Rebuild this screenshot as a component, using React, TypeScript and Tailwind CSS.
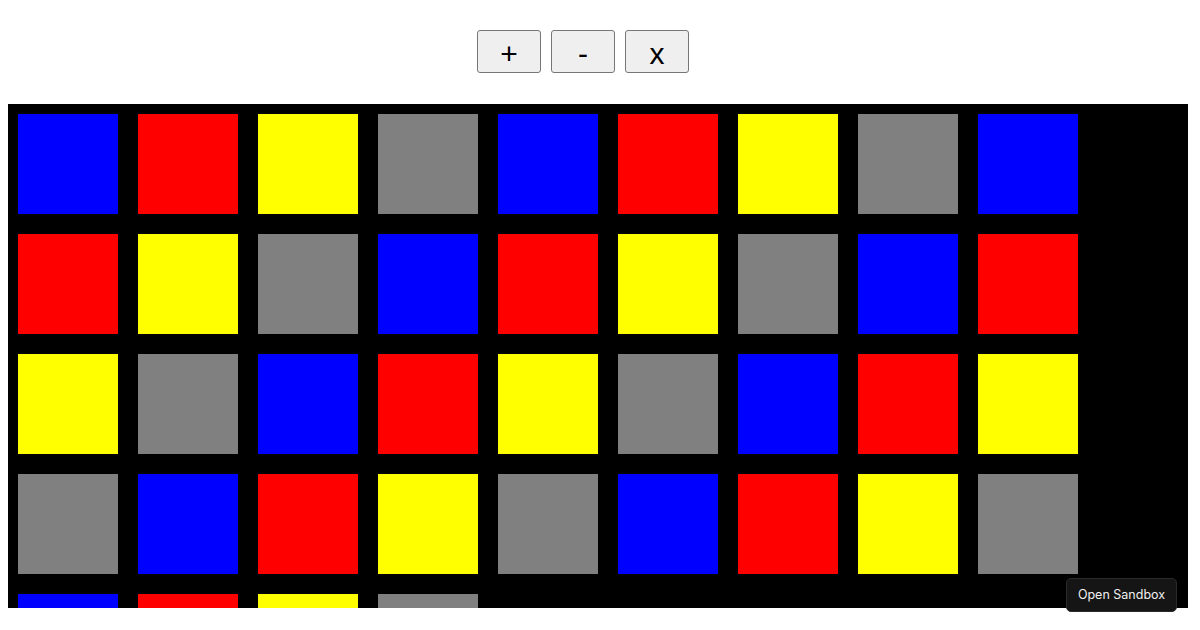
import React from "react";

const colors = ["bg-[#0000ff]", "bg-[#ff0000]", "bg-[#ffff00]", "bg-[#808080]"];

export default function App() {
  const items = Array.from({ length: 40 }, (_, i) => i);
  return (
    <div className="relative w-[1200px] h-[630px] overflow-hidden bg-white p-2" style={{ fontFamily: '"Liberation Sans", Arial, sans-serif' }}>
      <div className="flex justify-center gap-[10px] pt-[22px] pb-[31px] pr-[34px]">
        {["+", "-", "x"].map((t) => (
          <button
            key={t}
            className="w-[64px] h-[43px] flex items-center justify-center pt-[4px] bg-[#efefef] border border-[#767676] rounded-[3px] text-[30px] leading-none text-black"
            style={{ fontFamily: '"Liberation Sans", Arial, sans-serif' }}
          >
            {t}
          </button>
        ))}
      </div>
      <div className="bg-black w-[1180px] h-[504px] overflow-hidden">
        <div className="flex flex-wrap w-[1090px]">
          {items.map((i) => (
            <div key={i} className={`w-[100px] h-[100px] m-[10px] ${colors[i % 4]}`} />
          ))}
        </div>
      </div>
      <div
        className="absolute left-[1066px] top-[578px] w-[111px] h-[34px] rounded-[5px] bg-[#151515] border border-[#2a2a2a] flex items-center justify-center text-[12.5px] text-[#f0f0f0]"
        style={{ fontFamily: 'Inter, "Noto Sans", sans-serif' }}
      >
        Open Sandbox
      </div>
    </div>
  );
}
